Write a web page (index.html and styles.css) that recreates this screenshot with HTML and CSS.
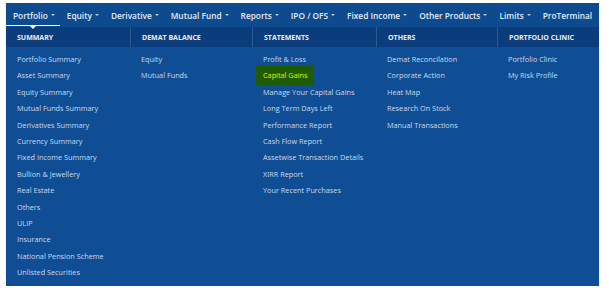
FILE: index.html
```html
<!DOCTYPE html>
<html lang="en">
<head>
  <meta charset="UTF-8">
  <title>Portfolio menu</title>
  <link rel="stylesheet" href="styles.css">
</head>
<body>
  <!-- TOP MENU -->
  <div class="menu">
    <nav class="nav">
      <a class="nav-item active">Portfolio<span class="caret"></span></a>
      <a class="nav-item">Equity<span class="caret"></span></a>
      <a class="nav-item">Derivative<span class="caret"></span></a>
      <a class="nav-item">Mutual Fund<span class="caret"></span></a>
      <a class="nav-item">Reports<span class="caret"></span></a>
      <a class="nav-item">IPO / OFS<span class="caret"></span></a>
      <a class="nav-item">Fixed Income<span class="caret"></span></a>
      <a class="nav-item">Other Products<span class="caret"></span></a>
      <a class="nav-item">Limits<span class="caret"></span></a>
      <a class="nav-item">ProTerminal</a>
    </nav>

    <!-- MEGA DROPDOWN -->
    <div class="mega">
      <div class="mega-head">
        <div class="col-head">Summary</div>
        <div class="col-head">Demat Balance</div>
        <div class="col-head">Statements</div>
        <div class="col-head">Others</div>
        <div class="col-head">Portfolio Clinic</div>
      </div>
      <div class="mega-body">
        <ul class="col">
          <li>Portfolio Summary</li>
          <li>Asset Summary</li>
          <li>Equity Summary</li>
          <li>Mutual Funds Summary</li>
          <li>Derivatives Summary</li>
          <li>Currency Summary</li>
          <li>Fixed Income Summary</li>
          <li>Bullion &amp; Jewellery</li>
          <li>Real Estate</li>
          <li>Others</li>
          <li>ULIP</li>
          <li>Insurance</li>
          <li>National Pension Scheme</li>
          <li>Unlisted Securities</li>
        </ul>
        <ul class="col">
          <li>Equity</li>
          <li>Mutual Funds</li>
        </ul>
        <ul class="col">
          <li>Profit &amp; Loss</li>
          <li><span class="current">Capital Gains</span></li>
          <li>Manage Your Capital Gains</li>
          <li>Long Term Days Left</li>
          <li>Performance Report</li>
          <li>Cash Flow Report</li>
          <li>Assetwise Transaction Details</li>
          <li>XIRR Report</li>
          <li>Your Recent Purchases</li>
        </ul>
        <ul class="col">
          <li>Demat Reconcilation</li>
          <li>Corporate Action</li>
          <li>Heat Map</li>
          <li>Research On Stock</li>
          <li>Manual Transactions</li>
        </ul>
        <ul class="col">
          <li>Portfolio Clinic</li>
          <li>My Risk Profile</li>
        </ul>
      </div>
    </div>
  </div>
</body>
</html>
```

FILE: styles.css
```css
/* Reset */
* {
  margin: 0;
  padding: 0;
  box-sizing: border-box;
}
body {
  font-family: 'Open Sans', 'DejaVu Sans', sans-serif;
  background-color: #fff;
  padding: 3px 0 0 6px;
}
.menu {
  width: 593px;
  background-color: #0f4e95;
  box-shadow: 0 1px 1px rgba(60, 90, 140, 0.35);
}
/* Top navigation */
.nav {
  display: flex;
  height: 24px;
  align-items: center;
  background-color: #0e4a8e;
}
.nav-item {
  position: relative;
  display: flex;
  align-items: center;
  height: 100%;
  padding: 0 5px 0 7px;
  font-size: 8.3px;
  font-weight: 600;
  color: #e3ebf6;
  white-space: nowrap;
  cursor: pointer;
}
.caret {
  display: inline-block;
  margin-left: 3px;
  border-left: 2.5px solid transparent;
  border-right: 2.5px solid transparent;
  border-top: 2.5px solid #b9cbe4;
}
.nav-item.active::after {
  content: '';
  position: absolute;
  left: 0;
  right: 0;
  bottom: 1px;
  border-bottom: 1px solid #fff;
}
.nav-item.active::before {
  content: '';
  position: absolute;
  left: 50%;
  bottom: -2px;
  margin-left: -3px;
  border-left: 3px solid transparent;
  border-right: 3px solid transparent;
  border-top: 3px solid #fff;
  z-index: 2;
}
/* Dropdown */
.mega-head,
.mega-body {
  display: grid;
  grid-template-columns: 124px 122px 124px 121px 102px;
}
.mega-head {
  background-color: #0b3c7b;
  height: 20px;
}
.col-head {
  display: flex;
  align-items: center;
  padding-left: 11px;
  font-size: 7px;
  font-weight: 700;
  text-transform: uppercase;
  color: #e8eef8;
  border-left: 1px solid #2a5a95;
}
.col-head:first-child {
  border-left: none;
}
.mega-body {
  padding: 4px 0 6px;
}
.col {
  list-style: none;
  padding-left: 11px;
}
.col li {
  height: 16.4px;
  line-height: 16.4px;
  font-size: 7.3px;
  color: #cbd9ec;
  white-space: nowrap;
}
.current {
  display: inline-block;
  margin-left: -7px;
  padding: 0 6px 0 7px;
  height: 19px;
  line-height: 19px;
  margin-top: -1px;
  background-color: #1f5b00;
  color: #e6f000;
}
```
